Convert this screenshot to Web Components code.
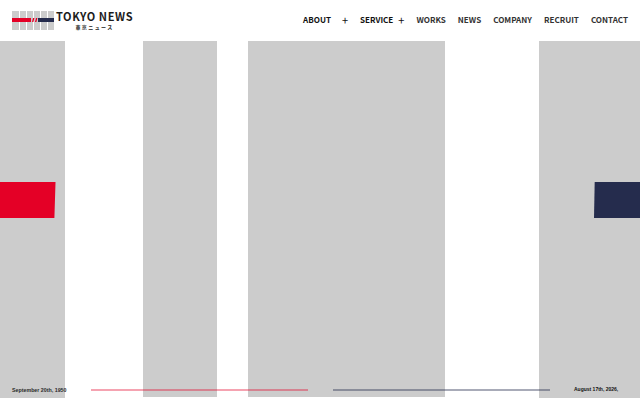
<!DOCTYPE html>
<html lang="en">
<head>
<meta charset="utf-8">
<title>Tokyo News</title>
<style>
  html, body { margin: 0; height: 100%; background: #fff; }
  body { width: 640px; height: 400px; overflow: hidden; display: flex; flex-direction: column; }
</style>
</head>
<body>
<site-header></site-header>
<stripe-stage></stripe-stage>
<script>
// Logo mark and wordmark
class TokyoLogo extends HTMLElement {
  constructor() {
    super();
    this.attachShadow({mode: 'open'}).innerHTML = `
      <style>
        :host { display: flex; align-items: flex-start; gap: 2px; }
        svg { display: block; margin-top: 11px; }
        .words { display: flex; flex-direction: column; align-items: center; margin-top: 10px; }
        .en { font: 700 11px/13.5px "Noto Sans CJK JP", sans-serif; letter-spacing: .58px; color: #1c1c1c; white-space: nowrap; }
        .ja { font: 700 5px/6px "Noto Sans CJK JP", sans-serif; letter-spacing: 1.4px; color: #222; margin-top: .5px; }
      </style>
      <svg width="42" height="19" viewBox="0 0 42 19">
        <g fill="#ccc">
          <rect x="0" width="7" height="19"/><rect x="8" width="6" height="19"/>
          <rect x="15" width="6" height="19"/><rect x="22" width="6" height="19"/>
          <rect x="29" width="6" height="19"/><rect x="36" width="6" height="19"/>
        </g>
        <rect x="0" y="7" width="19" height="4" fill="#e40026"/>
        <path d="M20 11l1-4h1.4l-1 4zM23 11l1-4h1.4l-1 4z" fill="#e40026"/>
        <rect x="26" y="7" width="16" height="4" fill="#252c4d"/>
      </svg>
      <div class="words">
        <span class="en">TOKYO NEWS</span>
        <span class="ja">東京ニュース</span>
      </div>`;
  }
}
window.customElements.define('tokyo-logo', TokyoLogo);

// One item of the main menu
class NavItem extends HTMLElement {
  constructor() {
    super();
    this.attachShadow({mode: 'open'}).innerHTML = `
      <style>
        :host { display: flex; align-items: center; font: 700 8.05px/14px "Noto Sans CJK JP", sans-serif; letter-spacing: 0; color: #333; white-space: nowrap; }
        :host([strong]) { color: #111; }
      </style>
      <slot></slot>`;
  }
}
window.customElements.define('nav-item', NavItem);

// Top bar
class SiteHeader extends HTMLElement {
  constructor() {
    super();
    this.attachShadow({mode: 'open'}).innerHTML = `
      <style>
        :host { display: flex; justify-content: space-between; align-items: flex-start; height: 41px; padding: 0 12px; flex: none; }
        nav { display: flex; gap: 12px; margin-top: 13px; }
        .plus { margin-left: 11px; font-weight: 400; font-size: 11px; }
        .plus.near { margin-left: 5px; }
      </style>
      <tokyo-logo></tokyo-logo>
      <nav>
        <nav-item strong>ABOUT<span class="plus">+</span></nav-item>
        <nav-item strong>SERVICE<span class="plus near">+</span></nav-item>
        <nav-item>WORKS</nav-item>
        <nav-item>NEWS</nav-item>
        <nav-item>COMPANY</nav-item>
        <nav-item>RECRUIT</nav-item>
        <nav-item>CONTACT</nav-item>
      </nav>`;
  }
}
window.customElements.define('site-header', SiteHeader);

// Gray stripes with the two colour tabs and the bottom timeline
class StripeStage extends HTMLElement {
  constructor() {
    super();
    this.attachShadow({mode: 'open'}).innerHTML = `
      <style>
        :host { display: block; position: relative; flex: 1; }
        .stripes { display: grid; grid-template-columns: 65px 78px 74px 31px 197px 94px 101px; height: 357px; }
        .g { background: #ccc; }
        .short { height: 356px; }
        .tab { position: absolute; top: 141px; height: 36px; }
        .red { left: 0; width: 55.5px; background: #e40026; clip-path: polygon(0 0, 100% 0, 98% 100%, 0 100%); }
        .navy { right: 0; width: 46px; background: #252c4d; clip-path: polygon(1.5% 0, 100% 0, 100% 100%, 0 100%); }
        .timeline { position: absolute; left: 12px; top: 343px; display: flex; align-items: flex-start;
          font: 700 5.3px/12px "Liberation Sans", sans-serif; color: #2a2a2a; white-space: nowrap; }
        .first { width: 55px; }
        .last { font-size: 5px; line-height: 11px; color: #111; }
        .line { height: 2px; margin-top: 5px; }
        .l1 { width: 217px; margin-left: 24px; background: rgba(228,0,38,.36); }
        .l2 { width: 217px; margin-left: 25px; margin-right: 24px; background: rgba(37,44,77,.4); }
      </style>
      <div class="stripes">
        <div class="g"></div><div></div><div class="g short"></div><div></div><div class="g short"></div><div></div><div class="g"></div>
      </div>
      <div class="tab red"></div>
      <div class="tab navy"></div>
      <div class="timeline">
        <span class="first">September 20th, 1950</span>
        <div class="line l1"></div>
        <div class="line l2"></div>
        <span class="last">August 17th, 2026,</span>
      </div>`;
  }
}
window.customElements.define('stripe-stage', StripeStage);
</script>
</body>
</html>
